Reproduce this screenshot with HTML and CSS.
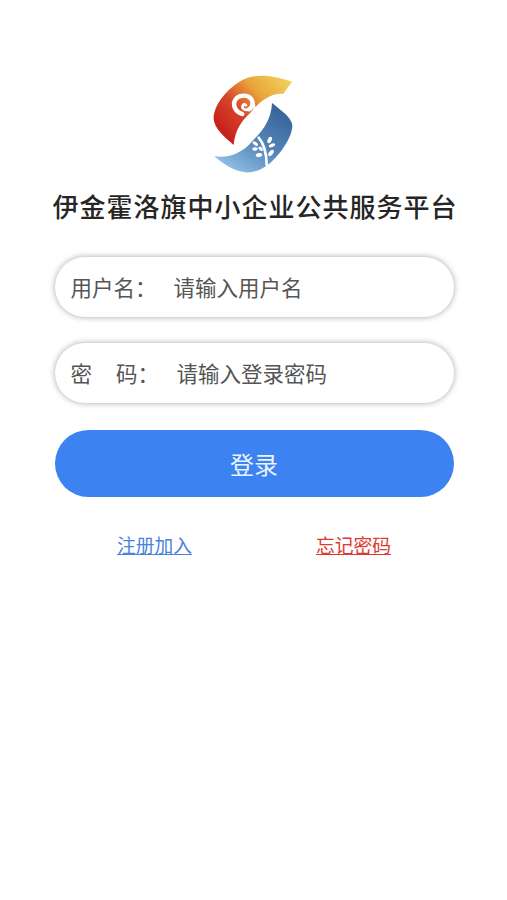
FILE: index.html
```html
<!DOCTYPE html>
<html lang="zh-CN">
<head>
    <meta charset="UTF-8">
    <meta name="viewport" content="width=device-width, initial-scale=1.0">
    <title>登录</title>
    <link rel="stylesheet" href="styles.css">
</head>
<body>
    <div class="login">
        <svg class="logo" viewBox="0 0 300 345">
            <defs>
                <linearGradient id="warm" x1="0.1" y1="0.8" x2="1" y2="0.1">
                    <stop offset="0" stop-color="#c7211c"/>
                    <stop offset="0.3" stop-color="#d5432a"/>
                    <stop offset="0.62" stop-color="#e9a43b"/>
                    <stop offset="1" stop-color="#f2d35c"/>
                </linearGradient>
                <linearGradient id="cool" x1="0.85" y1="0.1" x2="0.2" y2="1">
                    <stop offset="0" stop-color="#38649c"/>
                    <stop offset="0.5" stop-color="#5486b8"/>
                    <stop offset="1" stop-color="#94c2e8"/>
                </linearGradient>
            </defs>
            <path fill="url(#warm)" d="M92 240C60 213 35 190 32 163C31 125 65 78 112 49C150 27 192 26 268 50C258 61 250 73 241 87C206 82 170 109 142 143C115 168 96 195 92 240Z"/>
            <path fill="url(#cool)" d="M207 114C236 137 265 158 268 180C269 213 236 264 199 296C151 333 105 335 34 274C82 279 119 264 151 225C185 192 205 158 207 114Z"/>
            <g fill="none" stroke="#fff" stroke-linecap="round">
                <path stroke-width="13" d="M118 147C97 141 88 120 96 106C105 89 133 88 144 101C152 111 149 128 138 133"/>
                <path stroke-width="8" d="M138 133C126 138 116 130 119 122C121 117 127 117 129 121"/>
                <path stroke-width="6" d="M150 110Q159 128 150 143"/>
                <path stroke-width="8" d="M167 218Q190 244 191 300"/>
            </g>
            <g fill="#fff">
                <ellipse cx="200" cy="225" rx="6" ry="10" transform="rotate(25 200 225)"/>
                <ellipse cx="207" cy="241" rx="10" ry="5" transform="rotate(-25 207 241)"/>
                <ellipse cx="204" cy="264" rx="11" ry="6" transform="rotate(-50 204 264)"/>
                <ellipse cx="157" cy="236" rx="9" ry="5" transform="rotate(35 157 236)"/>
                <ellipse cx="156" cy="252" rx="8" ry="5" transform="rotate(-5 156 252)"/>
                <ellipse cx="173" cy="251" rx="8" ry="5" transform="rotate(40 173 251)"/>
                <ellipse cx="168" cy="270" rx="10" ry="6" transform="rotate(-10 168 270)"/>
            </g>
        </svg>
        <h1 class="title">伊金霍洛旗中小企业公共服务平台</h1>

        <form class="login-form">
            <div class="field">
                <label class="label" for="username">用户名：</label>
                <input class="input" type="text" id="username" name="username" placeholder="请输入用户名">
            </div>
            <div class="field">
                <label class="label label-wide" for="password"><span class="first">密</span>码：</label>
                <input class="input" type="password" id="password" name="password" placeholder="请输入登录密码">
            </div>
            <button class="submit" type="submit">登录</button>
        </form>

        <div class="links">
            <a class="link register" href="#">注册加入</a>
            <a class="link forget" href="#">忘记密码</a>
        </div>
    </div>
</body>
</html>
```

FILE: styles.css
```css
* {
    box-sizing: border-box;
}
body {
    margin: 0;
    background-color: #fff;
    font-family: "Noto Sans CJK SC", sans-serif;
    color: #555;
}
.login {
    display: flex;
    flex-direction: column;
    align-items: center;
    padding-top: 65px;
}
.logo {
    display: block;
    width: 100px;
    height: 115px;
    margin-right: 2px;
}
.title {
    margin: 7px 0 32px 3px;
    font-size: 26px;
    line-height: 38px;
    font-weight: 500;
    letter-spacing: 1px;
    white-space: nowrap;
    color: #262626;
}
.login-form {
    display: flex;
    flex-direction: column;
    gap: 26px;
    width: 399px;
    margin-left: 1px;
}
.field {
    display: flex;
    align-items: center;
    height: 60px;
    padding: 0 16px 2px;
    border-radius: 30px;
    background-color: #fff;
    box-shadow: 0 0 6px rgba(0, 0, 0, 0.35);
}
.label {
    flex: none;
    width: 103px;
    font-size: 21.5px;
    font-weight: 400;
    white-space: nowrap;
}
.label-wide {
    width: 106px;
}
.first {
    margin-right: 24px;
}
.input {
    flex: 1;
    min-width: 0;
    padding: 0;
    border: none;
    outline: none;
    background: none;
    font-family: inherit;
    font-size: 21.5px;
    font-weight: 400;
}
.input::placeholder {
    color: #555;
    opacity: 1;
}
.submit {
    height: 67px;
    margin-top: 1px;
    border: none;
    border-radius: 34px;
    background-color: #3c82f0;
    color: #e8f4ff;
    font-family: inherit;
    font-size: 24px;
    font-weight: 400;
    cursor: pointer;
}
.links {
    display: flex;
    justify-content: space-between;
    width: 274px;
    margin: 34px 0 0 1px;
}
.link {
    font-size: 18.75px;
    line-height: 28px;
    font-weight: 400;
    text-underline-offset: 1px;
    text-decoration-thickness: 1px;
}
.register {
    color: #4a83dc;
}
.forget {
    color: #dc3a30;
}
```
